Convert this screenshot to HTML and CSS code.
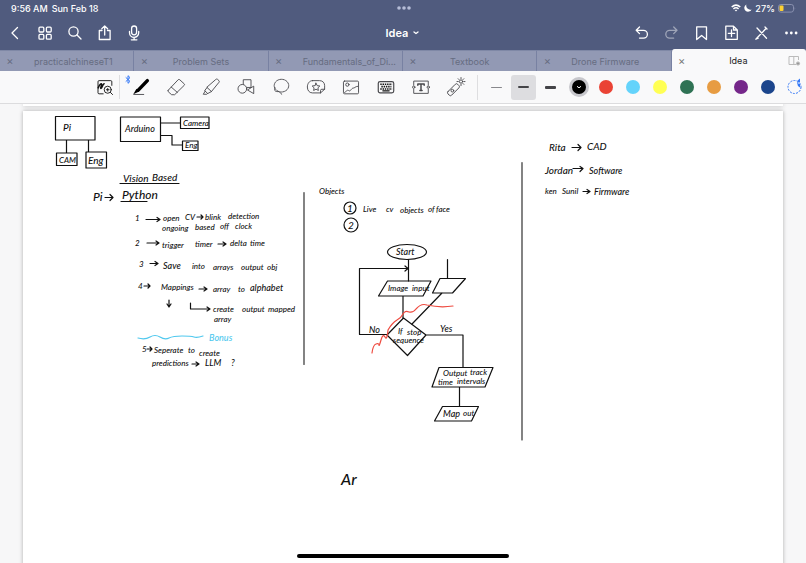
FILE: index.html
```html
<!DOCTYPE html>
<html lang="en">
<head>
  <meta charset="UTF-8">
  <meta name="viewport" content="width=device-width, initial-scale=1.0">
  <title>Idea</title>
  <link rel="stylesheet" href="styles.css">
</head>
<body>
  <header class="top">
    <div class="status">
      <div class="status-left"><span>9:56 AM</span><span>Sun Feb 18</span></div>
      <svg class="multitask" width="16" height="4" viewBox="0 0 16 4" fill="#b6bdd8"><circle cx="3" cy="2" r="1.800"/><circle cx="8" cy="2" r="1.800"/><circle cx="13" cy="2" r="1.800"/></svg>
      <div class="status-right">
        <svg width="10" height="8" viewBox="0 0 10 8" fill="none" stroke="#fff" stroke-width="1.5"><path d="M.7 3Q5-.8 9.3 3M2.4 4.9Q5 2.7 7.6 4.9"/><path d="M3.7 6.1L5 7.6 6.3 6.1Q5 5.2 3.7 6.1Z" fill="#fff" stroke="none"/></svg>
        <svg width="8" height="8" viewBox="0 0 8 8" fill="#fff"><path d="M2.4.5A3.8 3.8 0 1 0 7.6 5.4 4 4 0 0 1 2.4.5Z"/></svg>
        <span>27%</span>
        <svg width="18" height="9" viewBox="0 0 18 9"><rect x=".5" y=".5" width="15" height="7.6" rx="2.3" fill="none" stroke="#8990af"/><rect x="1.5" y="1.5" width="4" height="5.6" rx="1" fill="#fdd132"/><path d="M16.7 3v3q1-1.5 0-3" fill="#8990af"/></svg>
      </div>
    </div>
    <nav class="nav">
      <div class="nav-group">
        <button aria-label="Back"><svg viewBox="0 0 20 20"><path d="M12.5 4.5L7 10l5.500 5.500"/></svg></button>
        <button aria-label="Documents"><svg viewBox="0 0 20 20"><rect x="4" y="4.200" width="4.800" height="4.800" rx="1"/><rect x="11.400" y="4.200" width="4.800" height="4.800" rx="1"/><rect x="4" y="11.400" width="4.800" height="4.800" rx="1"/><rect x="11.400" y="11.400" width="4.800" height="4.800" rx="1"/></svg></button>
        <button aria-label="Search"><svg viewBox="0 0 20 20"><circle cx="8.500" cy="8.500" r="4.600"/><path d="M12 12l4 4"/></svg></button>
        <button aria-label="Share"><svg viewBox="0 0 20 20"><path d="M7 7.500H4.300V16.500h10.800V7.500H12.500M9.700 12V3M6.800 5.800L9.700 2.900l2.900 2.900"/></svg></button>
        <button aria-label="Record"><svg viewBox="0 0 20 20"><rect x="6.600" y="3" width="5" height="8.800" rx="2.500"/><path d="M4.500 8.500v1.300a4.600 4.600 0 0 0 9.200 0V8.500M9.100 14.400v2.300M6.300 16.800h5.600"/></svg></button>
      </div>
      <button class="doc-title">Idea <svg viewBox="0 0 8 6"><path d="M2 2l2 1.600L6 2"/></svg></button>
      <div class="nav-group">
        <button aria-label="Undo"><svg viewBox="0 0 20 20"><path d="M8.500 4L5.200 7.300l3.300 3.300M5.500 7.300h7a3.900 3.900 0 0 1 0 7.800H8.500"/></svg></button>
        <button class="faded" aria-label="Redo"><svg viewBox="0 0 20 20"><path d="M12.700 4L16 7.300l-3.300 3.300M15.700 7.300h-7a3.900 3.900 0 0 0 0 7.800h4"/></svg></button>
        <button aria-label="Bookmark"><svg viewBox="0 0 20 20"><path d="M5.700 3.800h9.800v12.700l-4.900-4-4.900 4z"/></svg></button>
        <button aria-label="Add page"><svg viewBox="0 0 20 20"><path d="M5.800 3.200h6.700l3.800 3.800v9.300H4.800V3.200zM12.500 3.200V7h3.800M10.500 7v6.500M7.300 10.300h6.400"/></svg></button>
        <button aria-label="Read mode"><svg viewBox="0 0 20 20"><path d="M5.500 15.500L15 5.500M6 5l9.500 10.200M14 4l2 2M4.800 16.200l2.400-1"/></svg></button>
        <button aria-label="More"><svg viewBox="0 0 20 20" class="solid"><circle cx="5.500" cy="10" r="1.400"/><circle cx="10.300" cy="10" r="1.400"/><circle cx="15.100" cy="10" r="1.400"/></svg></button>
      </div>
    </nav>
    <div class="tabs">
      <div class="tab"><button class="close" aria-label="Close tab">×</button><a href="#">practicalchineseT1</a></div>
      <div class="tab"><button class="close" aria-label="Close tab">×</button><a href="#">Problem Sets</a></div>
      <div class="tab"><button class="close" aria-label="Close tab">×</button><a href="#">Fundamentals_of_Di...</a></div>
      <div class="tab"><button class="close" aria-label="Close tab">×</button><a href="#">Textbook</a></div>
      <div class="tab"><button class="close" aria-label="Close tab">×</button><a href="#">Drone Firmware</a></div>
      <div class="tab active"><button class="close" aria-label="Close tab">×</button><a href="#">Idea</a>
        <svg class="split" viewBox="0 0 13 12"><path d="M10.500 5V1.500H1v8h7M5.800 1.500v8"/><circle cx="10" cy="8.500" r="1.600" fill="#999"/></svg>
      </div>
    </div>
  </header>

  <div class="toolbar">
    <div class="tools">
      <button class="zoom-tool" aria-label="Zoom window"><svg viewBox="0 0 22 22"><path d="M9 18.500H4.500a1.200 1.200 0 0 1-1.200-1.200V5.200A1.200 1.200 0 0 1 4.500 4h12.800a1.200 1.200 0 0 1 1.200 1.200v4"/><path d="M3.500 12c2-4.500 3.700-5.500 3.800-4s-1.800 5-.6 4.500S8.500 8 10 7.500" stroke-width="1.700"/><circle cx="14" cy="14" r="3.900"/><path d="M17 17l2.300 2.300M12.500 14h3M14 12.500v3"/></svg></button>
      <button class="pen-tool" aria-label="Pen"><svg viewBox="0 0 22 22"><path d="M18 4L8 14.500" stroke="#000" stroke-width="3.800"/><path d="M6 13L2.500 19l6.500-3z" fill="#000" stroke="none"/><path d="M3 19.200h11"/></svg><svg class="bt" viewBox="0 0 6 9"><path d="M1 2.600l4 3.800-2 1.900V.7l2 1.900L1 6.400"/></svg></button>
      <button aria-label="Eraser"><svg viewBox="0 0 22 22"><path d="M2.500 14.500L13.400 3a1.200 1.200 0 0 1 1.700 0l4.900 4.500a1.200 1.200 0 0 1 0 1.700L9.500 19.500H6.200L2.500 16.200a1.200 1.200 0 0 1 0-1.700zM5.700 11l6.800 6"/></svg></button>
      <button aria-label="Highlighter"><svg viewBox="0 0 22 22"><path d="M16.500 2.500q.8-.7 1.600 0l1.700 1.600q.7.800 0 1.700L11.500 16l-4.800-4.400zM6.700 11.600L4 15l3.400 3.200 4.100-2.200M4.600 15.500L2.500 19h3.800l1-1"/></svg></button>
      <button aria-label="Shapes"><svg viewBox="0 0 22 22"><path d="M8 8V3h8.500v8.500H12"/><circle cx="7" cy="13" r="4.800"/><path d="M19.500 10.500v7.800L13 14.500z"/></svg></button>
      <button aria-label="Lasso"><svg viewBox="0 0 22 22"><ellipse cx="11.500" cy="9.500" rx="8" ry="7" stroke-dasharray="2.500 1"/><path d="M4.500 12c-2 2.500.5 4.500 3.300 4 2-.4 2 2 4 3"/></svg></button>
      <button aria-label="Elements"><svg viewBox="0 0 22 22"><path d="M7 4h8c3.500 0 5.500 2.500 5.500 5.500v4L16 17.500H7c-3.500 0-5.500-3-5.500-6.500S3.500 4 7 4zM16 17.500v-2.600q0-1.400 1.400-1.400h3.100"/><path d="M11 6.800l1.300 2.700 2.900.4-2.100 2 .5 2.900-2.600-1.400-2.600 1.400.5-2.900-2.100-2 2.900-.4z"/></svg></button>
      <button aria-label="Image"><svg viewBox="0 0 22 22"><rect x="2.700" y="4.500" width="16.600" height="14" rx="1.200"/><circle cx="7" cy="8.400" r="1.800"/><path d="M4 17c2-1 3-3.500 4.500-2 2 1.500 3-3 5-2.800 1.500 0 2-1.700 5-2"/></svg></button>
      <button aria-label="Keyboard"><svg viewBox="0 0 22 22"><rect x="2.500" y="5" width="17" height="12.500" rx="2" stroke-width="1.300"/><g stroke="#111" stroke-linecap="butt" stroke-width="1.700" stroke-dasharray="1.600 .9"><path d="M4.700 8h13M5.900 10.600h11M4.700 13.200h13"/></g><path d="M7.500 15.200h7" stroke="#111" stroke-width="1.300"/></svg></button>
      <button aria-label="Text"><svg viewBox="0 0 22 22"><path d="M3 9V4.500h16V9M3 13.500V18h16v-4.500"/><circle cx="3" cy="11.200" r="1.300"/><circle cx="19" cy="11.200" r="1.300"/><path d="M7.500 9V7.800h7V9M11 8v6.800M9.800 14.800h2.400" stroke-width="1.600"/></svg></button>
      <button aria-label="Laser pointer"><svg viewBox="0 0 22 22"><rect x="-7.500" y="-2.800" width="15" height="5.600" rx="1.800" transform="translate(8.200 14) rotate(-45)"/><circle cx="7" cy="15" r="1.500"/><circle cx="16.500" cy="5" r="1.800"/><path d="M16.500 .6v1.400M16.500 8v1.400M12.100 5h1.400M19.500 5h1.400M13.400 1.900l1 1M18.600 7.100l1 1M19.600 1.900l-1 1"/></svg></button>
    </div>
    <div class="strokes">
      <button aria-label="Thin stroke"><span class="line thin"></span></button>
      <button class="selected" aria-label="Medium stroke"><span class="line"></span></button>
      <button aria-label="Thick stroke"><span class="line thick"></span></button>
    </div>
    <div class="colors">
      <button class="black" aria-label="Black"><svg viewBox="0 0 14 14"><path d="M5 6.300l2 1.500 2-1.500"/></svg></button>
      <button class="red" aria-label="Red"></button>
      <button class="sky" aria-label="Light blue"></button>
      <button class="yellow" aria-label="Yellow"></button>
      <button class="green" aria-label="Green"></button>
      <button class="orange" aria-label="Orange"></button>
      <button class="purple" aria-label="Purple"></button>
      <button class="navy" aria-label="Navy"></button>
      <button class="custom" aria-label="Custom colour"><svg viewBox="0 0 18 18"><circle cx="7.500" cy="10" r="6.500" fill="none" stroke="#3478f6" stroke-dasharray="2 1.200"/><path d="M13 1.500a5 5 0 0 0 0 9z" fill="#3478f6"/><path d="M11 6h2" stroke="#fff"/></svg></button>
    </div>
  </div>

  <main class="canvas">
    <div class="paper previous"></div>
    <div class="paper">
      <svg class="notes" viewBox="23 111 760 460">
        <!-- boards -->
        <g class="ink">
          <path d="M55.500 116.500H95V140H55.500zM66.500 140v13M88.500 140v12M56.500 153H77v12.500H56.500zM86 152h20.500v16H86z"/>
          <path d="M120.500 117H160.500v24.500H120.500zM160.500 123H180M180.500 117H209v11.500H180.500zM160.500 135.500h11.500V145h10M182.500 141h15.500v9.500h-15.500z"/>
          <path d="M120 183.500h59M121 201.500h26"/>
          <path class="rule" d="M304 192.500V364.500M522 162.500V440"/>
        </g>
        <g class="hand">
          <text class="md" x="63" y="131">Pi</text>
          <text class="sm" x="59" y="163">CAM</text>
          <text class="md" x="88" y="164">Eng</text>
          <text x="125" y="132">Arduino</text>
          <text class="sm" x="183" y="126">Camera</text>
          <text class="sm" x="185" y="148">Eng</text>
          <text class="md" x="123" y="182">Vision</text><text class="md" x="152" y="181">Based</text>
          <text class="lg" x="93" y="201">Pi</text>
          <text class="lg" x="122" y="199">Python</text>
        </g>

        <!-- pipeline steps -->
        <g class="ink">
          <path d="M105 197.500h8m-3-3l3 3-3 3"/>
          <path d="M146 219.500h14m-3-2l3 2-3 2M197 217h6m-2-2l2 2-2 2M147 243h12m-3-2l3 2-3 2M218 244h8m-3-2l3 2-3 2M150 263.500h8m-3-2l3 2-3 2M144 286h6m-2-2l2 2-2 2M199 289h8m-3-2l3 2-3 2"/>
          <path d="M169 300v7m-2-3l2 3 2-3M190.500 303v6H210m-3-2l3 2-3 2M147 349h5m-2-2l2 2-2 2M192 364h7m-3-2l3 2-3 2"/>
        </g>
        <path class="ink cyan" d="M138 338q7 2 12-1t10 0 9 1 13-2 12 1 9-1"/>
        <g class="hand">
          <text class="sm" x="135" y="221">1</text><text class="sm" x="163" y="221">open</text><text class="sm" x="185" y="220">CV</text><text class="sm" x="205" y="220">blink</text><text class="sm" x="228" y="219">detection</text>
          <text class="sm" x="162" y="231">ongoing</text><text class="sm" x="195" y="230">based</text><text class="sm" x="220" y="229">off</text><text class="sm" x="235" y="229">clock</text>
          <text class="sm" x="135" y="246">2</text><text class="sm" x="162" y="248">trigger</text><text class="sm" x="195" y="247">timer</text><text class="sm" x="230" y="246">delta</text><text class="sm" x="250" y="246">time</text>
          <text class="sm" x="139" y="267">3</text><text x="163" y="269">Save</text><text class="sm" x="192" y="269">into</text><text class="sm" x="213" y="270">arrays</text><text class="sm" x="241" y="270">output</text><text class="sm" x="267" y="270">obj</text>
          <text class="sm" x="138" y="289">4</text><text class="sm" x="161" y="290">Mappings</text><text class="sm" x="213" y="292">array</text><text class="sm" x="238" y="292">to</text><text x="250" y="291">alphabet</text>
          <text class="sm" x="213" y="312">create</text><text class="sm" x="242" y="312">output</text><text class="sm" x="268" y="312">mapped</text>
          <text class="sm" x="214" y="322">array</text>
          <text class="cyan" x="209" y="341">Bonus</text>
          <text class="sm" x="142" y="352">5</text><text class="sm" x="154" y="353">Seperate</text><text class="sm" x="188" y="353">to</text><text class="sm" x="199" y="356">create</text>
          <text class="sm" x="152" y="366">predictions</text><text x="205" y="366">LLM</text><text x="231" y="366">?</text>
        </g>

        <!-- flow chart -->
        <g class="ink">
          <circle cx="350" cy="208" r="6"/><circle cx="351" cy="225" r="7"/>
          <ellipse cx="407" cy="252" rx="19.500" ry="7.500"/>
          <path d="M408.500 259.500V281M408 268.500H359.500V334.500H387M405 266l3 2.500-3 2.500"/>
          <path d="M387.500 281H431l-8 15h-44.500zM403 296v22M440 278.500h25.500l-13 14.500h-20zM447.500 259.500v19M442 293l-30 31"/>
          <path d="M403.500 318l22.500 17-18.500 20.500L387 335zM426 335h37v32.500M439 367.500h54l-8 19.500H432zM459.500 387v19.500M442.500 406.500h36l-7 14.500h-37z"/>
        </g>
        <path class="ink red-line" d="M372 353q1-8 4-9t3 1 2-5 4-3 3-7q4-7 9-10 4-2 6-6t6-2q4 1 7-3 5-6 11-4 13 3 26 1"/>
        <g class="hand">
          <text class="sm" x="319" y="194">Objects</text>
          <text class="md" x="347" y="212">1</text><text class="md" x="348" y="229">2</text>
          <text class="sm" x="363" y="212">Live</text><text class="sm" x="386" y="212">cv</text><text class="sm" x="400" y="213">objects</text><text class="sm" x="428" y="212">of</text><text class="sm" x="436" y="212">face</text>
          <text x="396" y="255">Start</text>
          <text class="sm" x="388" y="291">Image</text><text class="sm" x="412" y="291">input</text>
          <text x="369" y="333">No</text><text x="440" y="332">Yes</text>
          <text class="sm" x="398" y="334">If</text><text class="sm" x="407" y="335">stop</text><text class="sm" x="393" y="343">sequence</text>
          <text class="sm" x="443" y="376">Output</text><text class="sm" x="470" y="375">track</text>
          <text class="sm" x="438" y="385">time</text><text class="sm" x="457" y="384">intervals</text>
          <text x="443" y="417">Map</text><text class="sm" x="463" y="416">out</text>
          <text class="xl" x="341" y="485">Ar</text>
        </g>

        <!-- roles -->
        <path class="ink" d="M572 147.500h9m-3-3l3 3-3 3M573 168.500h10m-3-2l3 2-3 3M583 191.500h7m-3-2l3 2-3 2"/>
        <g class="hand">
          <text class="md" x="549" y="151">Rita</text><text class="md" x="587" y="150">CAD</text>
          <text class="md" x="545" y="174">Jordan</text><text x="589" y="174">Software</text>
          <text class="sm" x="545" y="194">ken</text><text class="sm" x="562" y="194">Sunil</text><text x="594" y="195">Firmware</text>
        </g>
      </svg>
    </div>
    <div class="home-indicator"></div>
  </main>
</body>
</html>
```

FILE: styles.css
```css
* {
  box-sizing: border-box;
}

body {
  margin: 0;
  height: 100vh;
  display: flex;
  flex-direction: column;
  overflow: hidden;
  font-family: Inter, "Liberation Sans", sans-serif;
  background: #f7f7f8;
}

button {
  border: none;
  padding: 0;
  background: none;
  font: inherit;
  color: inherit;
  cursor: pointer;
}

svg {
  display: block;
}

/* header */
.top {
  background: #505b7e;
  color: #fff;
}

.status {
  display: grid;
  grid-template-columns: 1fr auto 1fr;
  align-items: center;
  height: 16px;
  padding: 0 10px 0 11px;
  font-size: 9px;
  font-weight: 500;
}

.status-left {
  display: flex;
  gap: 4px;
}

.status-right {
  display: flex;
  align-items: center;
  justify-content: flex-end;
  gap: 3px;
}

.nav {
  display: grid;
  grid-template-columns: 1fr auto 1fr;
  align-items: center;
  height: 33px;
}

.nav-group {
  display: flex;
}

.nav-group:last-child {
  justify-content: flex-end;
}

.nav-group button {
  width: 30px;
  display: flex;
  justify-content: center;
}

.nav svg {
  width: 20px;
  height: 20px;
  fill: none;
  stroke: #fff;
  stroke-width: 1.3;
  stroke-linecap: round;
  stroke-linejoin: round;
}

.nav svg.solid {
  fill: #fff;
  stroke: none;
}

.nav .faded {
  opacity: 0.45;
}

.doc-title {
  display: flex;
  align-items: center;
  gap: 4px;
  font-size: 11px;
  font-weight: 600;
}

.nav .doc-title svg {
  width: 8px;
  height: 6px;
}

/* tabs */
.tabs {
  display: flex;
  height: 22px;
  padding-top: 1px;
}

.tab {
  flex: 1 1 0;
  min-width: 0;
  display: grid;
  grid-template-columns: minmax(34px, 1fr) auto minmax(4px, 1fr);
  align-items: center;
  background: #9299b4;
  border-top: 1px solid #7f88a6;
  border-right: 1px solid #7881a2;
  font-size: 9px;
  color: #666c81;
}

.tab a {
  white-space: nowrap;
  color: inherit;
  text-decoration: none;
}

.close {
  justify-self: start;
  width: 20px;
  font-size: 11px;
  line-height: 12px;
}

.tab.active {
  background: #f9f9fa;
  border-color: #f9f9fa;
  border-radius: 3px 3px 0 0;
  margin-top: -1px;
  color: #222;
}

.tab.active .close {
  color: #777;
}

.split {
  width: 13px;
  height: 12px;
  justify-self: end;
  margin-right: 4px;
  fill: none;
  stroke: #bbb;
}

/* toolbar */
.toolbar {
  display: flex;
  align-items: center;
  height: 33px;
  padding-left: 88px;
  background: #f9f9fa;
  border-bottom: 1px solid #dcdcde;
}

.tools,
.strokes,
.colors {
  display: flex;
  flex: none;
  align-items: center;
}

.tools button {
  position: relative;
  width: 35px;
  height: 24px;
  display: flex;
  align-items: center;
  justify-content: center;
}

.tools svg {
  width: 20px;
  height: 20px;
  fill: none;
  stroke: #48484c;
  stroke-width: 1;
  stroke-linejoin: round;
  stroke-linecap: round;
}

.tools .zoom-tool {
  width: 32px;
  margin-right: 3px;
  padding-left: 3px;
  border-right: 1px solid #dedee0;
}

.tools .zoom-tool svg {
  stroke: #111;
}

.tools .bt {
  position: absolute;
  left: 2px;
  top: 0;
  width: 6px;
  height: 9px;
  stroke: #3478f6;
}

.strokes {
  margin-left: 4px;
  padding-left: 5px;
  border-left: 1px solid #dedee0;
}

.strokes button {
  width: 27px;
  height: 25px;
  display: flex;
  align-items: center;
  justify-content: center;
}

.strokes .selected {
  width: 25px;
  margin: 0 1px;
  background: #dddde0;
  border-radius: 3px;
}

.line {
  width: 11px;
  height: 2px;
  border-radius: 1px;
  background: #444448;
}

.line.thin {
  height: 1px;
  background: #88888c;
}

.line.thick {
  height: 3px;
}

.colors {
  gap: 13px;
  padding-left: 8px;
}

.colors button {
  width: 14px;
  height: 14px;
  border-radius: 50%;
}

.colors .black {
  background: #000;
  box-shadow: 0 0 0 3px #c7c7cc;
}

.black path {
  fill: none;
  stroke: #fff;
}

.red { background: #ea4335; }
.sky { background: #64d3fb; }
.yellow { background: #ffff54; }
.green { background: #2f7254; }
.orange { background: #e79c42; }
.purple { background: #75278a; }
.navy { background: #1b458c; }

.custom svg {
  width: 18px;
  height: 18px;
  margin: -3px 0 0 -1px;
}

/* pages */
.canvas {
  position: relative;
  flex: 1;
  min-height: 0;
  overflow: hidden;
}

.paper {
  margin: 0 23px;
  min-height: 100%;
  background: #fff;
  box-shadow: 0 0 4px rgba(0, 0, 0, 0.3);
}

.paper.previous {
  min-height: 0;
  height: 2px;
  margin-bottom: 5px;
}

.notes {
  width: 100%;
  height: auto;
}

.ink {
  fill: none;
  stroke: #111;
  stroke-width: 1.2;
  stroke-linecap: round;
  stroke-linejoin: round;
}

.rule {
  stroke: #333;
}

.ink.cyan {
  stroke: #4fc8ee;
}

.red-line {
  stroke: #ee4b40;
}

.hand {
  font-family: Lato, "Open Sans", sans-serif;
  font-size: 9px;
  font-style: italic;
  font-weight: 500;
  fill: #111;
}

.hand .sm {
  font-size: 8px;
}

.hand .md {
  font-size: 10px;
}

.hand .lg {
  font-size: 12px;
}

.hand .xl {
  font-size: 16px;
}

.hand .cyan {
  fill: #4fc8ee;
}

.home-indicator {
  position: absolute;
  bottom: 5px;
  left: 50%;
  width: 212px;
  height: 4px;
  margin-left: -106px;
  border-radius: 2px;
  background: #000;
}
```
